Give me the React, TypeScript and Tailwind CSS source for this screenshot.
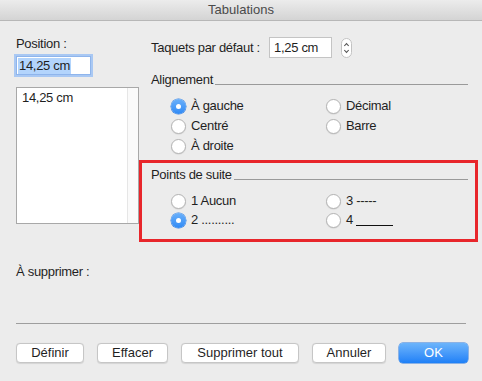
import React from 'react';

const Radio = ({ checked, label }: { checked?: boolean; label: React.ReactNode }) => (
  <div className="flex h-[20px] items-center">
    {checked ? (
      <span className="flex h-[15px] w-[15px] items-center justify-center rounded-full bg-gradient-to-b from-[#6ab0fa] to-[#2f8af5] shadow-[0_0_0_0.5px_#3b82e0]">
        <span className="h-[5px] w-[5px] rounded-full bg-white" />
      </span>
    ) : (
      <span className="h-[15px] w-[15px] rounded-full border border-[#b4b4b4] bg-white shadow-[0_0.5px_1px_rgba(0,0,0,0.12)]" />
    )}
    <span className="ml-[5px] text-[#1f1f1f]">{label}</span>
  </div>
);

const Btn = ({ w, children, primary }: { w: string; children: React.ReactNode; primary?: boolean }) => (
  <button
    className={
      primary
        ? `${w} h-[20px] rounded-[4px] bg-gradient-to-b from-[#6cb4fb] to-[#1d80f7] tracking-[0px] text-white shadow-[0_0_0_0.5px_#2a78de]`
        : `${w} h-[20px] rounded-[4px] border border-[#c6c6c6] bg-white tracking-[0px] text-[#1f1f1f] shadow-[0_0.5px_1px_rgba(0,0,0,0.1)]`
    }
  >
    {children}
  </button>
);

export default function App() {
  return (
    <div
      className="h-[381px] w-[482px] overflow-hidden bg-[#ececec] text-[13px] leading-[16px] tracking-[-0.3px] text-[#1f1f1f]"
      style={{ fontFamily: '"Liberation Sans", Arial, sans-serif' }}
    >
      {/* Title bar */}
      <div className="h-[21px] border-b border-[#b7b7b7] bg-gradient-to-b from-[#ececec] to-[#d4d4d4] text-center leading-[20px] tracking-[0px] text-[#4a4a4a]">
        Tabulations
      </div>

      <div className="flex pl-[16px]">
        {/* Left column */}
        <div className="w-[123px] pt-[15px]">
          <div>Position :</div>
          <div className="mt-[4px] flex h-[19px] w-[75px] items-center border border-[#8fb5ec] bg-white pl-[1px] shadow-[0_0_0_2px_#a9c8f3]">
            <span className="bg-[#b3d4fc] px-[1px]">14,25 cm</span>
          </div>
          <div className="mt-[12px] flex h-[137px] w-[123px] border border-[#a8a8a8] bg-white">
            <div className="flex-1 pl-[5px] pt-[2px]">14,25 cm</div>
            <div className="w-[11px] border-l border-[#e6e6e6] bg-[#fafafa]" />
          </div>
        </div>

        {/* Right column */}
        <div className="w-[339px]">
          <div className="mt-[16px] flex h-[21px] items-center pl-[12px]">
            <span className="w-[118px]">Taquets par défaut :</span>
            <div className="flex h-[21px] w-[63px] items-center border border-[#c4c4c4] bg-white pl-[4px]">1,25 cm</div>
            <svg className="ml-[9px]" width="11" height="20" viewBox="0 0 11 20">
              <rect x="0.5" y="0.5" width="10" height="19" rx="5" fill="#fff" stroke="#c2c2c2" />
              <path d="M3.3 8 L5.5 5.6 L7.7 8" fill="none" stroke="#555" strokeWidth="1.1" />
              <path d="M3.3 12 L5.5 14.4 L7.7 12" fill="none" stroke="#555" strokeWidth="1.1" />
            </svg>
          </div>

          <div className="mt-[14px] flex items-end pl-[12px] pr-[10px]">
            <span>Alignement</span>
            <span className="mb-[3px] ml-[2px] flex-1 border-b border-[#9a9a9a]" />
          </div>
          <div className="mt-[8px] grid grid-cols-[155px_1fr] pl-[32px]">
            <Radio checked label="À gauche" />
            <Radio label="Décimal" />
            <Radio label="Centré" />
            <Radio label="Barre" />
            <Radio label="À droite" />
          </div>

          <div className="mt-[4px] h-[82px] border-[3px] border-[#e8262b] pl-[9px] pr-[7px] pt-[4px]">
            <div className="flex items-end">
              <span>Points de suite</span>
              <span className="mb-[3px] ml-[2px] flex-1 border-b border-[#9a9a9a]" />
            </div>
            <div className="mt-[8px] grid grid-cols-[155px_1fr] pl-[20px]">
              <div className="h-[19px]"><Radio label="1 Aucun" /></div>
              <div className="h-[19px]"><Radio label="3 -----" /></div>
              <div className="h-[19px]"><Radio checked label="2 .........." /></div>
              <div className="h-[19px]">
                <Radio
                  label={
                    <span className="flex items-end">
                      4&nbsp;<span className="mb-[2px] w-[37px] border-b-[1.5px] border-[#111]" />
                    </span>
                  }
                />
              </div>
            </div>
          </div>
        </div>
      </div>

      <div className="px-[14px]">
        <div className="mt-[22px] pl-[2px]">À supprimer :</div>
        <div className="mx-[2px] mt-[43px] border-b border-[#9e9e9e]" />
        <div className="mt-[19px] flex gap-[13px] pl-[2px]">
          <Btn w="w-[68px]">Définir</Btn>
          <Btn w="w-[71px]">Effacer</Btn>
          <Btn w="w-[118px]">Supprimer tout</Btn>
          <Btn w="w-[74px]">Annuler</Btn>
          <Btn w="w-[69px]" primary>OK</Btn>
        </div>
      </div>
    </div>
  );
}
